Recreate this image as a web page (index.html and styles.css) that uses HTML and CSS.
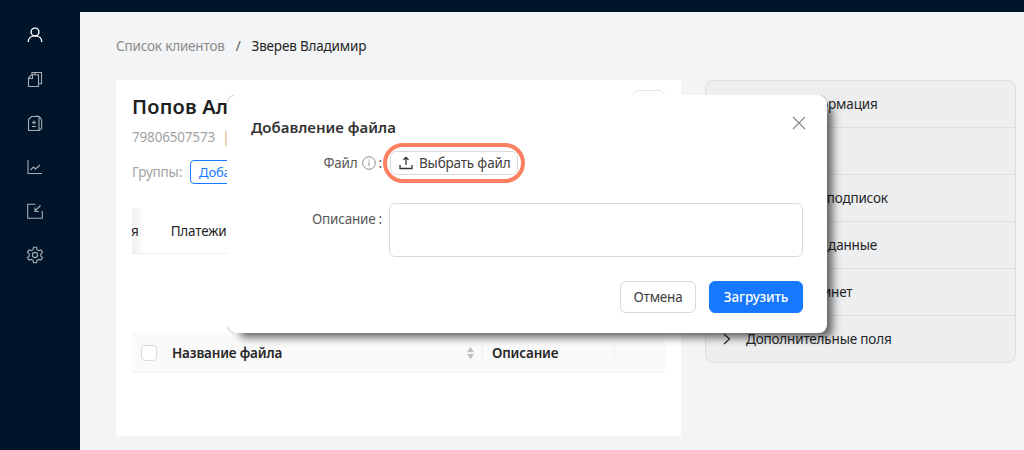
FILE: index.html
```html
<!DOCTYPE html>
<html lang="ru">
<head>
<meta charset="utf-8">
<title>Клиент</title>
<link rel="stylesheet" href="styles.css">
</head>
<body>
<div class="topbar"></div>
<div class="shell">
  <nav class="sidebar">
    <svg class="nav-icon nav-active" viewBox="0 0 16 16"><circle cx="8" cy="5" r="3.900"/><path d="M1.200 15c0-3.600 2.800-6.100 6.800-6.100s6.800 2.500 6.800 6.100"/></svg>
    <svg class="nav-icon" viewBox="0 0 16 16"><path d="M5 3.800V1.500h9.500v11.300H11.500"/><path d="M1.500 7 4.500 3.800h7V15.500h-10z"/><path d="M5.500 4v3.500h-4M8 1.500v2.300"/></svg>
    <svg class="nav-icon" viewBox="0 0 16 16"><path d="M1.500 4.500 4.500 1.500h7.500v14h-10.500z"/><path d="M9 .8c3.500 .4 5.700 2.700 5.700 6v6.700l-2.700 2"/><path d="M7 5.500v4M5 7.500h4M5 11.500h4"/></svg>
    <svg class="nav-icon" viewBox="0 0 16 16"><path d="M1 1V14.500H15"/><path d="M3.500 11 6.500 8 8.500 10 13 6"/></svg>
    <svg class="nav-icon" viewBox="0 0 16 16"><path d="M8.500 1.200H.7V15.300H15.300V8"/><path d="M13.500 2.500 8 8M8 4.500V8.500H12"/></svg>
    <svg class="nav-icon" viewBox="0 0 16 16"><circle cx="8" cy="8" r="2.600"/><path d="M6.500 .3h3l.5 2.300 1.700 1 2.300-.7 1.500 2.600-1.700 1.600v1.800l1.700 1.600-1.500 2.600-2.300-.7-1.700 1-.5 2.300h-3l-.5-2.300-1.700-1-2.300.7-1.500-2.600 1.700-1.600V7L.500 5.500l1.500-2.600 2.300.7 1.700-1z"/></svg>
  </nav>
  <main class="content">
    <div class="crumbs"><span class="crumb-link">Список клиентов</span><span class="crumb-sep">/</span><span class="crumb-cur">Зверев Владимир</span></div>
    <div class="columns">
      <section class="card">
        <div class="corner-btn"></div>
        <h1 class="client-name">Попов Алексей</h1>
        <div class="client-meta">79806507573 <span class="meta-sep">|</span></div>
        <div class="groups"><span class="groups-label">Группы:</span><span class="group-add">Добавить</span></div>
        <div class="tabs"><span class="tab tab-cut">я</span><span class="tab">Платежи</span></div>
        <div class="table-head">
          <div class="th th-check"><span class="checkbox"></span></div>
          <div class="th th-name">Название файла
            <svg class="sorter" viewBox="0 0 10 16"><path d="M5 1 9 7H1z"/><path d="M5 15 1 9h8z"/></svg>
          </div>
          <div class="th th-desc">Описание</div>
          <div class="th th-rest"></div>
        </div>
      </section>
      <aside class="collapse">
        <div class="row">Общая информация</div>
        <div class="row"></div>
        <div class="row">Управление подписок</div>
        <div class="row">Паспортные данные</div>
        <div class="row">Личный кабинет</div>
        <div class="row"><svg class="chev" viewBox="0 0 10 12"><path d="M2 1l5.500 5L2 11"/></svg>Дополнительные поля</div>
      </aside>
    </div>
  </main>
</div>

<div class="modal">
  <span class="arc arc-tl"></span>
  <span class="arc arc-tr"></span>
  <span class="arc arc-bl"></span>
  <svg class="modal-close" viewBox="0 0 14 14"><path d="M1 1l12 12M13 1 1 13"/></svg>
  <h2 class="modal-title">Добавление файла</h2>
  <div class="form-row">
    <div class="form-label">Файл
      <svg class="info" viewBox="0 0 14 14"><circle cx="7" cy="7" r="6.300"/><path d="M7 6v4.300M7 3.600v1.200"/></svg>
      <span class="colon">:</span></div>
    <div class="file-ring">
      <div class="file-btn">
        <svg class="upload" viewBox="0 0 14 14"><path d="M7 9V1.500M4.500 3.800 7 1.300l2.500 2.500M1 9v3.500h12V9"/></svg>
        <span class="file-text">Выбрать файл</span>
      </div>
    </div>
  </div>
  <div class="form-row form-row-desc">
    <div class="form-label">Описание<span class="colon">:</span></div>
    <div class="textarea"></div>
  </div>
  <div class="modal-actions">
    <div class="btn">Отмена</div>
    <div class="btn btn-primary">Загрузить</div>
  </div>
</div>
</body>
</html>
```
FILE: styles.css
```css
* { box-sizing: border-box; }
html, body { margin: 0; height: 450px; overflow: hidden; }
body {
  background: #001529;
  font-family: "Noto Sans", sans-serif;
  font-size: 13.5px;
  letter-spacing: -.18px;
  color: #262626;
  display: flex;
  flex-direction: column;
}
.topbar { height: 12px; flex: none; }
.shell { display: flex; flex: 1; min-height: 0; }
.sidebar {
  width: 80px;
  flex: none;
  display: flex;
  flex-direction: column;
  align-items: center;
  gap: 28px;
  padding: 15px 10px 0 0;
}
.nav-icon {
  width: 16px;
  height: 16px;
  fill: none;
  stroke: #a6adb4;
  stroke-width: 1.100;
  overflow: visible;
}
.nav-active { stroke: #fff; stroke-width: 1.400; }
.content { flex: 1; background: #f2f4f6; padding: 23px 8px 0 36px; min-width: 0; }
.crumbs { display: flex; gap: 11px; line-height: 22px; height: 45px; }
.crumb-link { color: #8c8c8c; }
.crumb-sep { color: #595959; }
.crumb-cur { color: #262626; }
.columns { display: flex; gap: 24px; align-items: flex-start; }
.card {
  width: 565px;
  height: 356px;
  background: #fff;
  padding: 12px 16px 0;
  position: relative;
}
.corner-btn {
  position: absolute;
  top: 10px;
  right: 16px;
  width: 32px;
  height: 32px;
  border: 1px solid #e5e5e5;
  border-radius: 6px;
}
.client-name { margin: 0; font-size: 20px; font-weight: 600; line-height: 30px; color: #1f1f1f; letter-spacing: .2px; }
.client-meta { margin-top: 4px; line-height: 22px; color: #a3a3a3; }
.meta-sep { color: #e0b080; margin-left: 4px; }
.groups { margin-top: 12px; display: flex; align-items: center; gap: 8px; color: #a3a3a3; height: 24px; }
.group-add {
  border: 1px solid #1677ff;
  border-radius: 4px;
  color: #1677ff;
  font-size: 13px;
  line-height: 22px;
  padding: 0 8px;
}
.tabs {
  margin-top: 24px;
  height: 46px;
  border-bottom: 1px solid #eeeeee;
  display: flex;
  align-items: center;
  gap: 32px;
  background: linear-gradient(to right, #f0f0f0, #fff 12px);
}
.tab-cut { margin-left: -1px; }
.table-head {
  margin-top: 79px;
  height: 40px;
  display: flex;
  align-items: center;
  background: #fafafa;
  border-bottom: 1px solid #f0f0f0;
  font-weight: 600;
  color: #262626;
}
.th { display: flex; align-items: center; height: 100%; position: relative; }
.th-check { width: 40px; padding-left: 9px; flex: none; }
.checkbox { width: 16px; height: 16px; background: #fff; border: 1px solid #d9d9d9; border-radius: 4px; }
.th-name { width: 311px; flex: none; justify-content: space-between; padding-right: 8px; }
.th-name::after, .th-desc::after {
  content: "";
  position: absolute;
  right: 0;
  top: 9px;
  height: 22px;
  width: 1px;
  background: #f0f0f0;
}
.sorter { width: 9px; height: 14px; fill: #bfbfbf; }
.th-desc { width: 132px; flex: none; padding-left: 9px; }
.th-rest { flex: 1; }
.collapse {
  width: 311px;
  height: 283px;
  background: #eceef0;
  border: 1px solid #dcdee0;
  border-radius: 8px;
}
.row {
  height: 47px;
  border-bottom: 1px solid #dcdee0;
  display: flex;
  align-items: center;
  padding: 0 0 0 16px;
  color: #262626;
  gap: 14px;
}
.row:nth-child(-n+5) { padding-left: 40px; }
.row:last-child { border-bottom: 0; padding-bottom: 2px; }
.chev { width: 10px; height: 12px; fill: none; stroke: #262626; stroke-width: 1.200; }
.modal {
  position: absolute;
  left: 227px;
  top: 95px;
  width: 600px;
  height: 238px;
  background: #fff;
  border-radius: 8px;
  box-shadow: 9px 8px 10px -4px rgba(0, 0, 0, .65);
  padding: 21px 24px 0;
}
.arc { position: absolute; width: 7px; height: 7px; background: #fff; border: 0 solid #cfcfcf; }
.arc-tl { left: 0; top: 0; border-width: 1px 0 0 1px; border-top-left-radius: 7px; }
.arc-tr { right: 0; top: 0; border-width: 1px 1px 0 0; border-top-right-radius: 7px; }
.arc-bl { left: 0; bottom: 0; border-width: 0 0 1px 1px; border-bottom-left-radius: 7px; }
.modal-close {
  position: absolute;
  top: 21px;
  right: 21px;
  width: 14px;
  height: 14px;
  fill: none;
  stroke: #8c8c8c;
  stroke-width: 1.300;
}
.modal-title { margin: 0; font-size: 15px; font-weight: 600; line-height: 22px; color: #333; letter-spacing: 0; }
.form-row { display: flex; gap: 7px; margin-top: 5px; align-items: center; }
.form-label {
  width: 131px;
  flex: none;
  display: flex;
  align-items: center;
  justify-content: flex-end;
  gap: 4px;
  color: #595959;
}
.info { width: 14px; height: 14px; fill: none; stroke: #8c8c8c; stroke-width: 1; }
.colon { margin-left: -1px; }
.file-ring { border: 4px solid #fb8061; border-radius: 20px; padding: 4px 3px; margin-left: -6px; }
.file-btn {
  display: flex;
  align-items: center;
  gap: 6px;
  height: 24px;
  width: 128px;
  padding: 0 8px;
  border: 1px solid #d9d9d9;
  border-radius: 6px;
  color: #404040;
}
.file-text { white-space: nowrap; }
.upload { width: 14px; height: 14px; flex: none; fill: none; stroke: #333; stroke-width: 1.300; }
.form-row-desc { margin-top: 20px; align-items: flex-start; }
.form-row-desc .form-label { padding-top: 7px; }
.textarea { width: 414px; height: 54px; border: 1px solid #d9d9d9; border-radius: 6px; }
.modal-actions { display: flex; justify-content: flex-end; gap: 13px; margin-top: 24px; }
.btn {
  height: 32px;
  width: 76px;
  justify-content: center;
  display: flex;
  align-items: center;
  border: 1px solid #d9d9d9;
  border-radius: 6px;
  color: #404040;
  background: #fff;
}
.btn-primary { width: 94px; background: #1677ff; border-color: #1677ff; color: #fff; font-weight: 500; }
```
